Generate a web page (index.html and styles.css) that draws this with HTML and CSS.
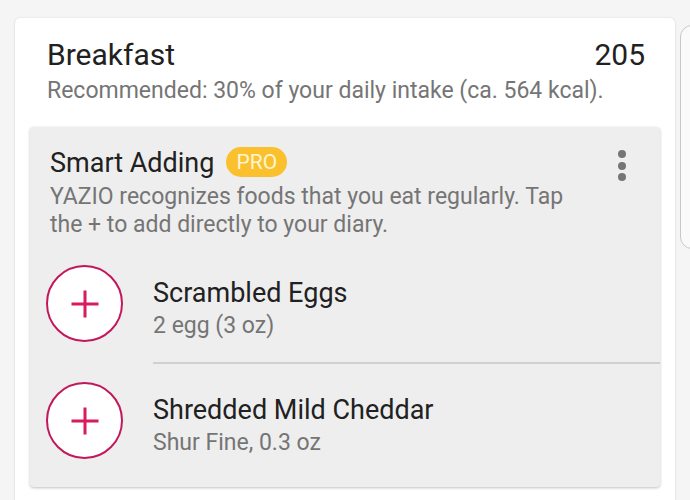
FILE: index.html
```html
<!DOCTYPE html>
<html>
<head>
    <link rel="stylesheet" href="styles.css">
</head>
<body>
    <div class="pager">
        <div class="card">
            <div class="meal-header">
                <div class="meal-title">
                    <span>Breakfast</span>
                    <span class="meal-kcal">205</span>
                </div>
                <div class="meal-hint">Recommended: 30% of your daily intake (ca. 564 kcal).</div>
            </div>

            <div class="smart">
                <div class="smart-head">
                    <div class="smart-title">
                        <span>Smart Adding</span>
                        <span class="pro-badge">PRO</span>
                    </div>
                    <div class="menu-btn">
                        <span class="dot"></span>
                        <span class="dot"></span>
                        <span class="dot"></span>
                    </div>
                </div>
                <div class="smart-desc">YAZIO recognizes foods that you eat regularly. Tap the + to add directly to your diary.</div>

                <div class="food-list">
                    <div class="food-row">
                        <div class="add-btn">
                            <svg width="30" height="30" viewBox="0 0 30 30">
                                <path d="M15 1.5v27M1.5 15h27" stroke="#d81b60" stroke-width="3" fill="none"/>
                            </svg>
                        </div>
                        <div class="food-info">
                            <div class="food-name">Scrambled Eggs</div>
                            <div class="food-amount">2 egg (3 oz)</div>
                        </div>
                    </div>
                    <div class="food-row">
                        <div class="add-btn">
                            <svg width="30" height="30" viewBox="0 0 30 30">
                                <path d="M15 1.5v27M1.5 15h27" stroke="#d81b60" stroke-width="3" fill="none"/>
                            </svg>
                        </div>
                        <div class="food-info">
                            <div class="food-name">Shredded Mild Cheddar</div>
                            <div class="food-amount">Shur Fine, 0.3 oz</div>
                        </div>
                    </div>
                </div>
            </div>
        </div>
        <div class="next-card"></div>
    </div>
</body>
</html>
```

FILE: styles.css
```css
body {
    margin: 0;
    background-color: #f5f5f5;
    font-family: Roboto, "Noto Sans", sans-serif;
    overflow: hidden;
}

.pager {
    display: flex;
    align-items: flex-start;
    gap: 5px;
    padding: 18px 0 0 15px;
    height: 482px;
    overflow: hidden;
}

.card {
    flex: 0 0 660px;
    height: 520px;
    background: #ffffff;
    border-radius: 5px;
    box-shadow: 0 0 2px rgba(0, 0, 0, 0.12), 0 1px 2px rgba(0, 0, 0, 0.1);
    padding: 0 15px;
    box-sizing: border-box;
}

.next-card {
    flex: 0 0 40px;
    height: 222px;
    margin-top: 7px;
    background: #fafafa;
    border: 1px solid #c8c8c8;
    border-radius: 12px;
}

.meal-header {
    padding: 19px 15px 0 17px;
}

.meal-title {
    display: flex;
    justify-content: space-between;
    font-size: 30px;
    color: #212121;
}

.meal-hint {
    margin-top: 5px;
    font-size: 23px;
    color: #757575;
}

.smart {
    margin-top: 23px;
    background: #eeeeee;
    border-radius: 4px;
    box-shadow: 0 1px 3px rgba(0, 0, 0, 0.25);
    padding: 20px 0 8px 20px;
}

.smart-head {
    display: flex;
    justify-content: space-between;
    align-items: flex-start;
    padding-right: 34px;
}

.smart-title {
    display: flex;
    align-items: center;
    gap: 12px;
    font-size: 27px;
    color: #212121;
}

.pro-badge {
    background: #fbc02d;
    color: #fff6d0;
    font-size: 21px;
    line-height: 30px;
    padding: 0 10px;
    border-radius: 15px;
    margin-top: -2px;
}

.menu-btn {
    display: flex;
    flex-direction: column;
    gap: 3.5px;
    padding-top: 3px;
}

.dot {
    width: 8px;
    height: 8px;
    border-radius: 50%;
    background: #757575;
}

.smart-desc {
    max-width: 530px;
    font-size: 23px;
    line-height: 28px;
    color: #757575;
    margin-top: 2px;
}

.food-list {
    margin-top: 8px;
}

.food-row {
    display: flex;
    align-items: flex-start;
    gap: 30px;
    margin-left: -4px;
}

.add-btn {
    flex: 0 0 77px;
    height: 77px;
    margin-top: 18px;
    box-sizing: border-box;
    border: 2px solid #c2185b;
    border-radius: 50%;
    background: #ffffff;
    display: flex;
    align-items: center;
    justify-content: center;
}

.food-info {
    flex: 1;
    padding: 30px 0 23px;
}

.food-row:not(:last-child) .food-info {
    border-bottom: 2px solid #d0d0d0;
}

.food-name {
    font-size: 27px;
    color: #212121;
}

.food-amount {
    margin-top: 3px;
    font-size: 23px;
    color: #757575;
}
```
